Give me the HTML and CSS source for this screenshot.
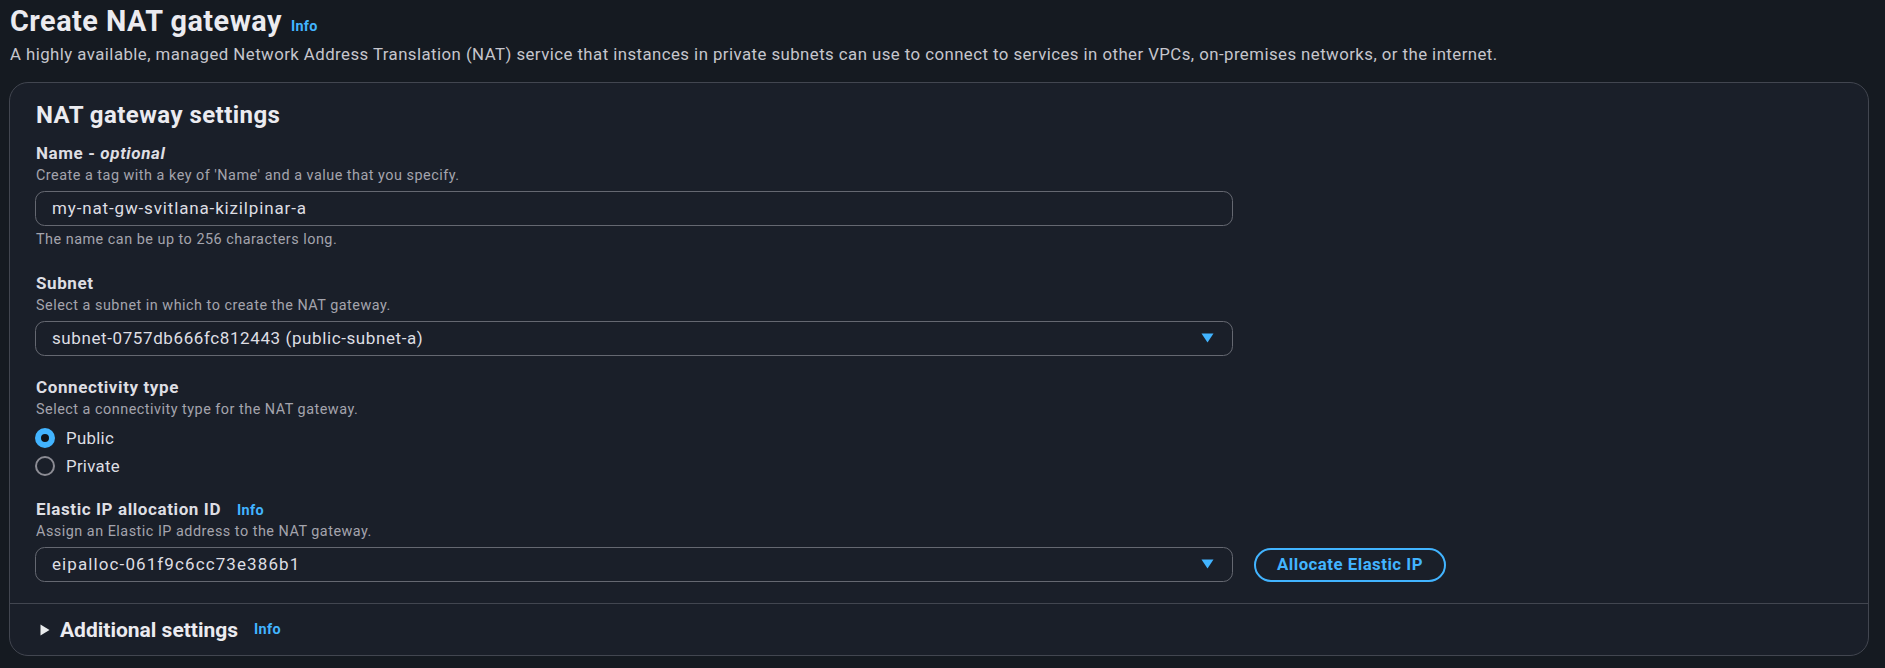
FILE: index.html
```html
<!DOCTYPE html>
<html lang="en">
<head>
<meta charset="utf-8">
<title>Create NAT gateway</title>
<link rel="stylesheet" href="styles.css">
</head>
<body>
<div class="page">
  <header class="page-header">
    <h1 class="title">Create NAT gateway<a class="info info-title" href="#">Info</a></h1>
    <p class="page-desc">A highly available, managed Network Address Translation (NAT) service that instances in private subnets can use to connect to services in other VPCs, on-premises networks, or the internet.</p>
  </header>

  <section class="card">
    <div class="card-body">
      <h2 class="card-title">NAT gateway settings</h2>

      <div class="field field-name">
        <div class="label">Name - <em>optional</em></div>
        <div class="desc">Create a tag with a key of 'Name' and a value that you specify.</div>
        <div class="control input">my-nat-gw-svitlana-kizilpinar-a</div>
        <div class="constraint">The name can be up to 256 characters long.</div>
      </div>

      <div class="field field-subnet">
        <div class="label">Subnet</div>
        <div class="desc">Select a subnet in which to create the NAT gateway.</div>
        <div class="control select">
          <span class="select-value value-subnet">subnet-0757db666fc812443 (public-subnet-a)</span>
          <svg class="caret" width="13" height="10" viewBox="0 0 13 10"><path d="M0.5 0.5 H12.5 L6.5 9.5 Z" fill="#42b4ff"/></svg>
        </div>
      </div>

      <div class="field">
        <div class="label">Connectivity type</div>
        <div class="desc">Select a connectivity type for the NAT gateway.</div>
        <div class="radio-group">
          <div class="radio-row"><span class="radio radio-on"></span><span class="radio-label">Public</span></div>
          <div class="radio-row"><span class="radio"></span><span class="radio-label">Private</span></div>
        </div>
      </div>

      <div class="field field-eip">
        <div class="label">Elastic IP allocation ID<a class="info info-label" href="#">Info</a></div>
        <div class="desc">Assign an Elastic IP address to the NAT gateway.</div>
        <div class="eip-row">
          <div class="control select">
            <span class="select-value value-eip">eipalloc-061f9c6cc73e386b1</span>
            <svg class="caret" width="13" height="10" viewBox="0 0 13 10"><path d="M0.5 0.5 H12.5 L6.5 9.5 Z" fill="#42b4ff"/></svg>
          </div>
          <button class="btn-outline" type="button">Allocate Elastic IP</button>
        </div>
      </div>
    </div>

    <div class="card-footer">
      <svg class="expand-icon" width="10" height="12" viewBox="0 0 10 12"><path d="M0.5 0.5 L9.5 6 L0.5 11.5 Z" fill="#e9ebed"/></svg>
      <span class="footer-title">Additional settings</span>
      <a class="info info-footer" href="#">Info</a>
    </div>
  </section>
</div>
</body>
</html>
```

FILE: styles.css
```css
* { box-sizing: border-box; }

html, body {
  margin: 0;
  padding: 0;
  background: #151a21;
}

body {
  font-family: Roboto, "Liberation Sans", Arial, sans-serif;
  color: #c6c6cd;
}

.page {
  padding: 3px 16px 0 9px;
}

.title {
  margin: 0;
  padding-left: 1px;
  font-size: 28.8px;
  line-height: 36px;
  font-weight: 700;
  letter-spacing: 0.5px;
  color: #ebebf0;
}

.info {
  color: #42b4ff;
  font-weight: 700;
  font-size: 14.4px;
  line-height: 1;
  letter-spacing: 0.3px;
  text-decoration: none;
}

.info-title { margin-left: 9px; }
.info-label { margin-left: 16px; }
.info-footer { margin-left: 16px; }

.page-desc {
  margin: 3px 0 0 0;
  padding-left: 1px;
  font-size: 16.8px;
  line-height: 24px;
  letter-spacing: 0.45px;
  color: #c6c6cd;
}

.card {
  margin-top: 16px;
  background: #1a1f29;
  border: 1px solid #424650;
  border-radius: 19px;
}

.card-body {
  padding: 18px 25px 21px 25px;
}

.card-title {
  margin: 0;
  padding-left: 1px;
  font-size: 24px;
  line-height: 28px;
  font-weight: 700;
  letter-spacing: 0.45px;
  color: #ebebf0;
}

.field { margin-top: 20px; }
.field-name { margin-top: 13px; }
.field-subnet { margin-top: 22px; }
.field-eip { margin-top: 18px; }

.label {
  padding-left: 1px;
  font-size: 17px;
  line-height: 22px;
  font-weight: 700;
  letter-spacing: 0.6px;
  color: #dedee3;
}

.label em { font-style: italic; }

.desc,
.constraint {
  padding-left: 1px;
  font-size: 14.4px;
  line-height: 20px;
  letter-spacing: 0.5px;
  color: #a4a4ad;
}

.desc { margin-top: 2px; }
.constraint { margin-top: 4px; }

.control {
  width: 1198px;
  height: 35px;
  margin-top: 5px;
  border: 1px solid #656871;
  border-radius: 9.6px;
  display: flex;
  align-items: center;
  padding: 0 18px 1px 16px;
  font-size: 17px;
  letter-spacing: 0.85px;
  color: #dedee3;
}

.value-subnet { letter-spacing: 0.6px; }
.value-eip { letter-spacing: 1.1px; }

.select { justify-content: space-between; }

.eip-row {
  display: flex;
  align-items: center;
  gap: 21px;
  margin-top: 5px;
}

.eip-row .control { margin-top: 0; }

.btn-outline {
  width: 192px;
  height: 34px;
  border: 2px solid #42b4ff;
  border-radius: 20px;
  background: transparent;
  color: #42b4ff;
  font-family: inherit;
  font-size: 16.8px;
  font-weight: 700;
  letter-spacing: 0.5px;
  padding: 0 0 1px 0;
}

.radio-group { margin-top: 4px; }

.radio-row {
  height: 28px;
  display: flex;
  align-items: center;
}

.radio {
  width: 20px;
  height: 20px;
  border-radius: 50%;
  border: 2px solid #8c8c94;
  flex: none;
}

.radio-on {
  border: 6px solid #42b4ff;
  background: #0f141a;
}

.radio-label {
  margin-left: 11px;
  font-size: 16.8px;
  letter-spacing: 0.3px;
  color: #dedee3;
}

.card-footer {
  border-top: 1px solid #424650;
  padding: 12px 25px 11px 30px;
  display: flex;
  align-items: center;
  height: 52px;
}

.expand-icon { flex: none; }

.footer-title {
  margin-left: 10px;
  font-size: 21px;
  line-height: 28px;
  font-weight: 700;
  color: #ebebf0;
}
```
